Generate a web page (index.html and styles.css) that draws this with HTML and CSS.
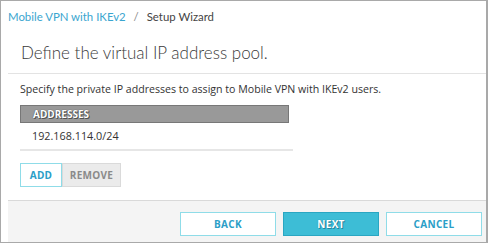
FILE: index.html
```html
<!DOCTYPE html>
<html lang="en">
<head>
    <meta charset="UTF-8">
    <title>Setup Wizard</title>
    <link rel="stylesheet" href="styles.css">
</head>
<body>
    <div class="frame">
        <div class="breadcrumb">
            <a class="crumb-link">Mobile VPN with IKEv2</a>
            <span class="crumb-sep">/</span>
            <span class="crumb-current">Setup Wizard</span>
        </div>
        <div class="wizard">
            <h1 class="title">Define the virtual IP address pool.</h1>
            <div class="content">
                <p class="intro">Specify the private IP addresses to assign to Mobile VPN with IKEv2 users.</p>
                <div class="table">
                    <div class="table-head">ADDRESSES</div>
                    <div class="table-row">192.168.114.0/24</div>
                </div>
                <div class="actions">
                    <button class="btn btn-add">ADD</button>
                    <button class="btn btn-remove">REMOVE</button>
                </div>
            </div>
            <div class="footer">
                <button class="btn btn-nav">BACK</button>
                <button class="btn btn-nav btn-primary">NEXT</button>
                <button class="btn btn-nav">CANCEL</button>
            </div>
        </div>
    </div>
</body>
</html>
```

FILE: styles.css
```css
html, body {
    margin: 0;
    padding: 0;
}

body {
    background-color: #fff;
    font-family: "Open Sans", Arial, sans-serif;
    color: #333;
}

.frame {
    box-sizing: border-box;
    width: 488px;
    height: 243px;
    border: 1px solid #a9a9a9;
    border-right-width: 2px;
    overflow: hidden;
}

.breadcrumb {
    padding: 9px 0 0 7px;
    height: 25px;
    box-sizing: border-box;
    font-family: Lato, "Open Sans", sans-serif;
    font-size: 11.4px;
}

.crumb-link {
    color: #3aa5cf;
}

.crumb-sep {
    color: #888;
    margin: 0 5px;
}

.crumb-current {
    color: #444;
}

.wizard {
    margin-left: 7px;
}

.title {
    margin: 0;
    padding: 16px 0 0 13px;
    height: 48px;
    box-sizing: border-box;
    font-family: Lato, "Open Sans", sans-serif;
    font-weight: 300;
    font-size: 17px;
    color: #3a3a3a;
    border-bottom: 1px solid #e3e3e3;
}

.content {
    padding: 8px 0 0 12px;
    height: 126px;
    box-sizing: border-box;
}

.intro {
    margin: 0 0 9px;
    font-size: 10.6px;
    color: #333;
}

.table {
    width: 273px;
}

.table-head {
    box-sizing: border-box;
    width: 269px;
    height: 18px;
    line-height: 16px;
    padding-left: 12px;
    background-color: #999;
    border: 1px solid #777;
    color: #fff;
    font-weight: bold;
    font-size: 10px;
    text-shadow: 0 0 1px #333, 1px 1px 0 #555;
}

.table-row {
    height: 26px;
    line-height: 26px;
    padding-left: 12px;
    font-size: 10.8px;
    color: #333;
    border-bottom: 2px solid #e6e6e6;
}

.actions {
    display: flex;
    margin-top: 12px;
}

.btn {
    box-sizing: border-box;
    height: 24px;
    padding: 0;
    font-family: "Open Sans", Arial, sans-serif;
    font-weight: bold;
    font-size: 10px;
    letter-spacing: 0.3px;
    background-color: #fff;
    border: 1px solid #8fdce8;
    color: #2b9ec7;
}

.btn-add {
    width: 42px;
}

.btn-remove {
    width: 59px;
    background-color: #ebebeb;
    border-color: #dadada;
    color: #8a8a8a;
}

.footer {
    display: flex;
    justify-content: flex-end;
    gap: 7px;
    height: 42px;
    box-sizing: border-box;
    padding: 11px 4px 0 0;
    background-color: #f4f4f4;
    border-top: 1px solid #d9d9d9;
}

.btn-nav {
    width: 96px;
}

.btn-primary {
    background-color: #3dbdd6;
    border-color: #2aa6c2;
    color: #fff;
    text-shadow: 0 0 1px #1d7f99, 1px 1px 0 #27879f;
}
```
